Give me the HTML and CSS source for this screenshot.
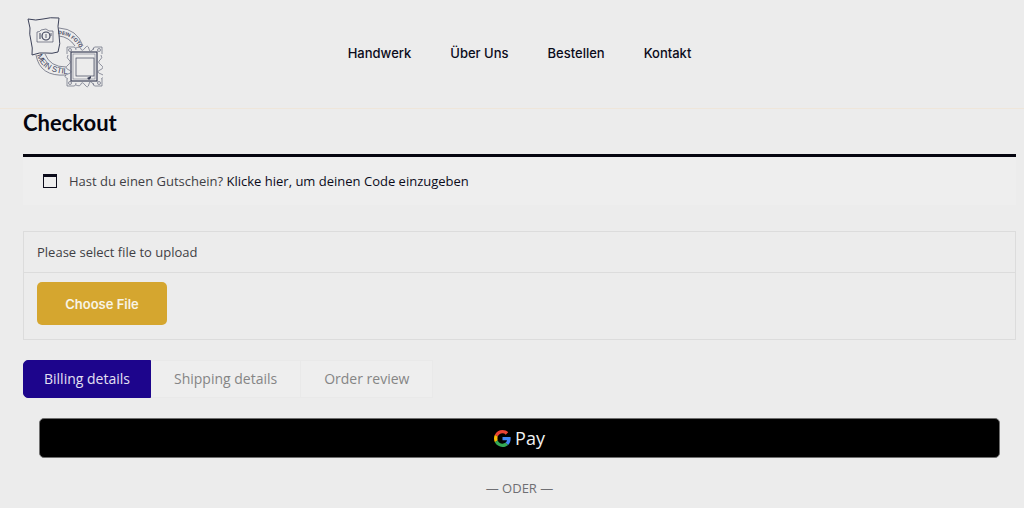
FILE: index.html
```
<!DOCTYPE html>
<html lang="de">
<head>
    <meta charset="UTF-8">
    <meta name="viewport" content="width=device-width, initial-scale=1.0">
    <title>Checkout</title>
    <link rel="stylesheet" href="styles.css">
</head>
<body>

<header class="site-header">
    <a href="#" class="logo" aria-label="Startseite">
        <svg width="76" height="71" viewBox="0 0 76 71" fill="none" stroke="#3d4259" stroke-width="1">
            <!-- photo -->
            <path d="M1 2Q9 4 16 2T32 1Q30 9 32 18T31 35Q25 37 19 36T5 38Q6 31 4 24T3 11Z"/>
            <path d="M10 15q3 0 4-2l5-1 3 2 4 0v11H10z" stroke-width=".6"/>
            <path d="M13 16v6" stroke-width="1"/>
            <circle cx="19" cy="19" r="4" stroke-width="1.200"/>
            <path d="M19 17v4M24 16v3" stroke-width=".8"/>
            <!-- ribbons -->
            <path d="M32 11Q50 12 56 29M32 19Q42 20 48 29M9 38Q13 60 39 58M18 37Q23 50 39 50" stroke-width=".6"/>
            <path id="arcTop" d="M31 17Q48 18 55 36" stroke="none"/>
            <path id="arcBottom" d="M10 38Q15 57 44 57" stroke="none"/>
            <g class="logo-text">
                <text><textPath href="#arcTop">DEIN FOTO</textPath></text>
                <text class="logo-text-big"><textPath href="#arcBottom">MEIN STIL</textPath></text>
            </g>
            <!-- frame -->
            <rect x="44" y="35" width="26" height="29" stroke-width="1.200"/>
            <rect x="46" y="37" width="22" height="25" stroke-width=".4"/>
            <rect x="49" y="41" width="18" height="18" stroke-width=".7"/>
            <path d="M60 61l4-2v2l-2 2z" fill="#3d4259" stroke="none"/>
            <g stroke-width=".7" stroke="#656a7d">
                <path d="M40 37v-7h7q2 0 2 3M75 37v-7h-7q-2 0-2 3M40 62v7h7q2 0 2-3M75 62v7h-7q-2 0-2-3"/>
                <path d="M49 31q4-2 5 1t4-1 4 1 5-1M49 68q4 2 5-1t4 1 4-1 5 1M41 38q-2 3 1 5t-1 5 1 5-1 4 0 5M74 38q2 3-1 5t1 5-1 5 1 4 0 5"/>
                <circle cx="43" cy="33" r="1.500"/>
                <circle cx="72" cy="33" r="1.500"/>
                <circle cx="43" cy="66" r="1.500"/>
                <circle cx="72" cy="66" r="1.500"/>
            </g>
        </svg>
    </a>
    <nav class="main-nav">
        <a href="#">Handwerk</a>
        <a href="#">Über Uns</a>
        <a href="#">Bestellen</a>
        <a href="#">Kontakt</a>
    </nav>
</header>

<main class="checkout">
    <h1>Checkout</h1>

    <div class="coupon-info">
        <svg class="coupon-icon" width="14" height="14" viewBox="0 0 14 14">
            <path d="M0 0h14v14H0zM1 3v10h12V3z" fill="#0b0b1a" fill-rule="evenodd"/>
        </svg>
        <p>Hast du einen Gutschein? <a href="#">Klicke hier, um deinen Code einzugeben</a></p>
    </div>

    <div class="upload-box">
        <label class="upload-label" for="fileUpload">Please select file to upload</label>
        <div class="upload-row">
            <input type="file" id="fileUpload">
        </div>
    </div>

    <div class="tabs">
        <button class="tab active" type="button">Billing details</button>
        <button class="tab" type="button">Shipping details</button>
        <button class="tab" type="button">Order review</button>
    </div>

    <div class="express">
        <button class="gpay-btn" type="button">
            <svg width="17" height="17" viewBox="0 0 48 48" aria-hidden="true">
                <path fill="#EA4335" d="M24 9.500c3.500 0 6.700 1.200 9.200 3.600l6.900-6.900C35.900 2.400 30.500 0 24 0 14.600 0 6.500 5.400 2.600 13.200l8 6.200C12.400 13.700 17.700 9.500 24 9.500z"/>
                <path fill="#4285F4" d="M47 24.500c0-1.600-.2-3.100-.4-4.500H24v9h12.900c-.6 3-2.300 5.500-4.800 7.200l7.700 6C44.400 38 47 31.800 47 24.500z"/>
                <path fill="#FBBC05" d="M10.500 28.600c-.5-1.500-.8-3-.8-4.600s.3-3.100.8-4.600l-8-6.200C.9 16.500 0 20.100 0 24s.9 7.500 2.600 10.800z"/>
                <path fill="#34A853" d="M24 48c6.500 0 11.900-2.100 15.900-5.800l-7.700-6c-2.200 1.500-4.900 2.300-8.200 2.300-6.300 0-11.600-4.200-13.500-9.900l-8 6.200C6.500 42.600 14.600 48 24 48z"/>
            </svg>
            <span>Pay</span>
        </button>
        <p class="divider">— ODER —</p>
    </div>
</main>

</body>
</html>
```
FILE: styles.css
```
* {
    box-sizing: border-box;
}
body {
    font-family: "Open Sans", "Noto Sans", sans-serif;
    font-size: 13px;
    line-height: 20px;
    background-color: #ececec;
    color: #3f3f45;
    margin: 0;
}
a {
    color: #0b0b1a;
    text-decoration: none;
}
p {
    margin: 0;
}
.site-header {
    display: grid;
    grid-template-columns: 1fr auto 1fr;
    align-items: center;
    padding: 17px 12px 20px 27px;
    border-bottom: 1px solid #efe6da;
}
.logo svg {
    display: block;
}
.logo-text {
    font-family: "Liberation Sans", sans-serif;
    font-size: 5px;
    font-weight: bold;
    fill: #3d4259;
    stroke: none;
}
.logo-text-big {
    font-size: 8px;
    font-weight: normal;
}
.main-nav {
    display: flex;
    gap: 39px;
    font-family: Inter, sans-serif;
    font-weight: 500;
}
.checkout {
    padding: 0 8px 10px 23px;
}
h1 {
    font-family: Lato, sans-serif;
    font-size: 22px;
    line-height: 28px;
    color: #05050f;
    margin: 0 0 17px;
}
.coupon-info {
    display: flex;
    align-items: center;
    gap: 12px;
    padding: 14px 20px;
    border-top: 3px solid #05050f;
    background-color: #eeeeee;
}
.upload-box {
    margin-top: 26px;
    border: 1px solid #dcdcdc;
}
.upload-label {
    display: block;
    padding: 10px 13px;
    border-bottom: 1px solid #dcdcdc;
}
.upload-row {
    padding: 9px 13px 14px;
}
.upload-row input {
    display: block;
    width: 130px;
    overflow: hidden;
    font-size: 0;
    color: transparent;
}
.upload-row input::file-selector-button {
    width: 130px;
    height: 43px;
    margin: 0;
    border: none;
    border-radius: 5px;
    background-color: #d5a62f;
    color: #f8f4e6;
    font-family: Inter, sans-serif;
    font-size: 13px;
    font-weight: 600;
    cursor: pointer;
}
.tabs {
    display: flex;
    margin-top: 20px;
}
.tab {
    padding: 8px 23px;
    border: 1px solid #e9e9e9;
    border-left: none;
    background-color: #eeeeee;
    color: #858585;
    font-family: inherit;
    font-size: 14px;
    line-height: 20px;
    cursor: pointer;
}
.tab.active {
    padding: 8px 20px;
    border: 1px solid #1d058c;
    border-radius: 5px 0 0 5px;
    background-color: #1d058c;
    color: #e4e0f2;
}
.express {
    padding: 20px 16px 0;
}
.gpay-btn {
    display: flex;
    align-items: center;
    justify-content: center;
    gap: 4px;
    width: 100%;
    height: 40px;
    border: 1px solid #6f6f6f;
    border-radius: 5px;
    background-color: #000;
    color: #f2f2f2;
    font-family: "Open Sans", sans-serif;
    font-size: 18px;
    cursor: pointer;
}
.divider {
    margin-top: 20px;
    color: #6f6f73;
    text-align: center;
}
```
